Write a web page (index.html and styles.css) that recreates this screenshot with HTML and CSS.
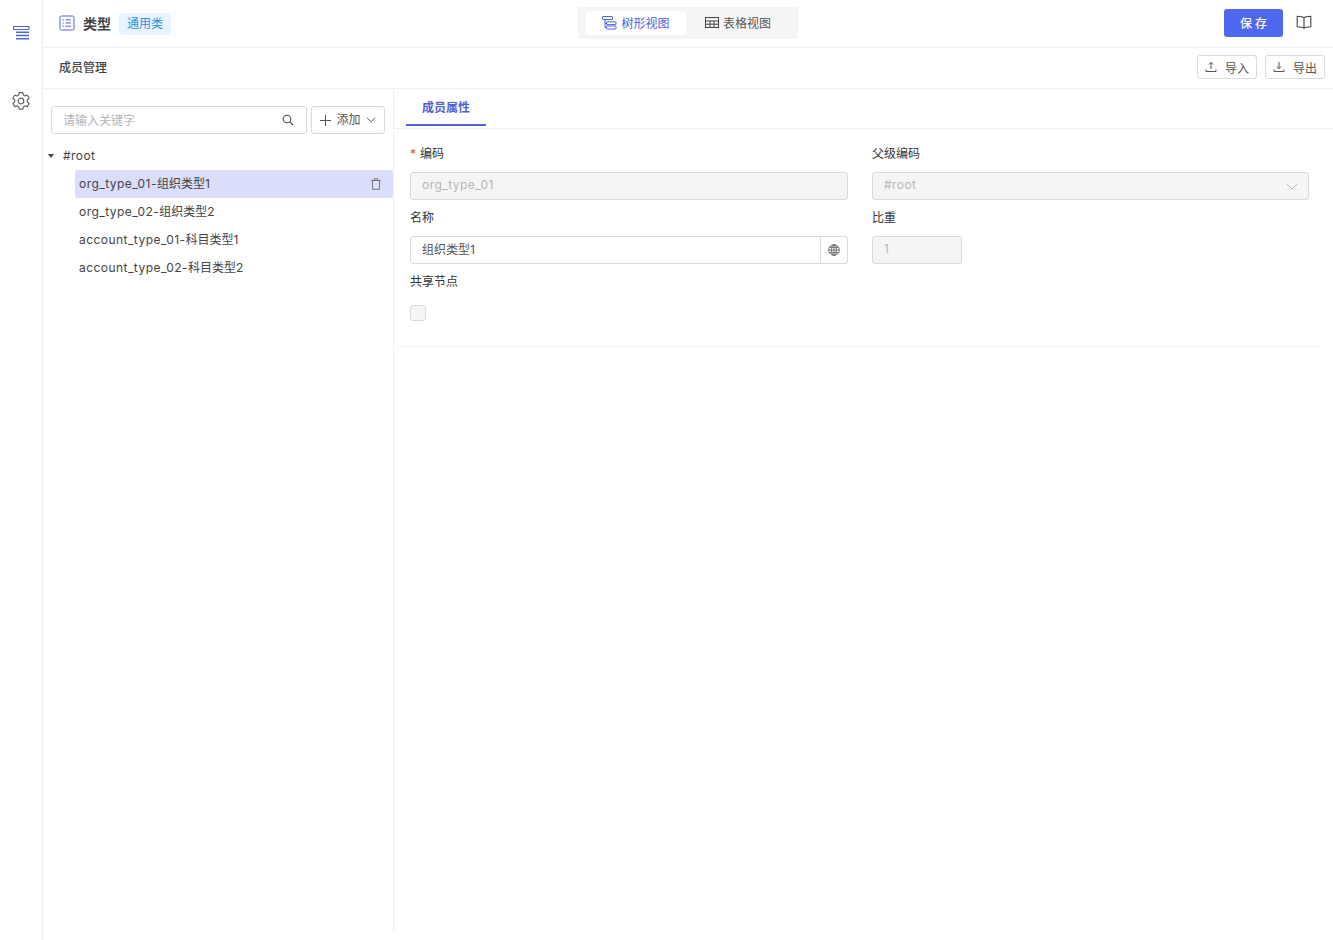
FILE: index.html
```html
<!DOCTYPE html>
<html lang="zh-CN">
<head>
    <meta charset="UTF-8">
    <title>类型</title>
    <link rel="stylesheet" href="styles.css">
</head>
<body>
    <div class="app">
        <!-- Side rail -->
        <aside class="rail">
            <svg class="rail-icon" width="17" height="15" viewBox="0 0 17 15" fill="none" stroke="#4f63d8" stroke-width="1.100">
                <rect x="0.500" y="0.500" width="15.500" height="3" rx="0.500"/>
                <path d="M3 6.300h13M3 9.500h13M3 12.800h13" stroke-width="1.500"/>
            </svg>
            <svg class="rail-icon gear" width="20" height="20" viewBox="0 0 20 20" fill="none" stroke="#666" stroke-width="1.200" stroke-linejoin="round">
                <path d="M8.200 1.600h3.600l.6 2.400 1.500.9 2.400-.7 1.800 3.100-1.800 1.700v1.800l1.800 1.700-1.800 3.100-2.400-.7-1.500.9-.6 2.400H8.200l-.6-2.400-1.500-.9-2.400.7-1.800-3.100L3.700 10.800V9L1.900 7.300l1.800-3.100 2.400.7 1.500-.9z"/>
                <circle cx="10" cy="10" r="2.800"/>
            </svg>
        </aside>

        <main class="main">
            <!-- Top bar -->
            <header class="topbar">
                <div class="title-group">
                    <svg width="16" height="16" viewBox="0 0 16 16" fill="none" stroke="#4f63d8" stroke-width="1">
                        <rect x="1" y="1" width="14" height="14" rx="1.500"/>
                        <path d="M6.500 4.800h5.500M6.500 8h5.500M6.500 11.200h5.500"/>
                        <path d="M3.500 4.800h1.200M3.500 8h1.200M3.500 11.200h1.200" stroke-width="1.200"/>
                    </svg>
                    <span class="title">类型</span>
                    <span class="tag">通用类</span>
                </div>
                <div class="view-switch">
                    <div class="view-option active">
                        <svg width="15" height="14" viewBox="0 0 15 14" fill="none" stroke="#4f63d8" stroke-width="1">
                            <rect x="0.500" y="0.500" width="10" height="3" rx="0.500"/>
                            <path d="M3 3.500V11.500H4.500M3 7.500h1.500"/>
                            <rect x="4.500" y="5.800" width="9.500" height="2.800" rx="0.500"/>
                            <rect x="4.500" y="10" width="9.500" height="3" rx="0.500"/>
                        </svg>
                        <span>树形视图</span>
                    </div>
                    <div class="view-option">
                        <svg width="14" height="13" viewBox="0 0 14 13" fill="none" stroke="#444" stroke-width="1">
                            <rect x="0.500" y="1.500" width="13" height="10"/>
                            <path d="M0.500 5h13M0.500 8.200h13M5 5v6.500M9 5v6.500"/>
                        </svg>
                        <span>表格视图</span>
                    </div>
                </div>
                <div class="top-actions">
                    <button class="btn-save">保 存</button>
                    <svg width="16" height="15" viewBox="0 0 16 15" fill="none" stroke="#444" stroke-width="1.100" stroke-linejoin="round">
                        <path d="M8 3C7 1.800 5 1.200 1.200 1.200v10.600C5 11.800 7 12.300 8 13.500c1-1.200 3-1.700 6.800-1.700V1.200C11 1.200 9 1.800 8 3zM8 3v10.500"/>
                    </svg>
                </div>
            </header>

            <!-- Sub header -->
            <div class="subbar">
                <span class="subbar-title">成员管理</span>
                <div class="subbar-actions">
                    <button class="btn-small">
                        <svg width="12" height="12" viewBox="0 0 12 12" fill="none" stroke="#555" stroke-width="1">
                            <path d="M6 8V1.500M3.800 3.500 6 1.300l2.200 2.200M1 8.500v2h10v-2"/>
                        </svg>
                        <span>导入</span>
                    </button>
                    <button class="btn-small">
                        <svg width="12" height="12" viewBox="0 0 12 12" fill="none" stroke="#555" stroke-width="1">
                            <path d="M6 1v6.500M3.800 5.500 6 7.700l2.200-2.200M1 8.500v2h10v-2"/>
                        </svg>
                        <span>导出</span>
                    </button>
                </div>
            </div>

            <div class="content">
                <!-- Tree panel -->
                <section class="tree-panel">
                    <div class="tree-tools">
                        <div class="search">
                            <span class="search-text">请输入关键字</span>
                            <svg width="12" height="12" viewBox="0 0 12 12" fill="none" stroke="#444" stroke-width="1.100">
                                <circle cx="5" cy="5" r="3.800"/>
                                <path d="M7.800 7.800 11 11"/>
                            </svg>
                        </div>
                        <button class="btn-add">
                            <svg width="11" height="11" viewBox="0 0 11 11" fill="none" stroke="#555" stroke-width="1">
                                <path d="M5.500 0v11M0 5.500h11"/>
                            </svg>
                            <span>添加</span>
                            <svg width="10" height="6" viewBox="0 0 10 6" fill="none" stroke="#555" stroke-width="1">
                                <path d="M1 .8 5 4.800 9 .8"/>
                            </svg>
                        </button>
                    </div>
                    <div class="tree-root">
                        <span class="caret"></span>
                        <span class="latin">#root</span>
                    </div>
                    <ul class="tree-list">
                        <li class="tree-item selected">
                            <span><span class="latin">org_type_01-</span>组织类型1</span>
                            <svg width="12" height="12" viewBox="0 0 12 12" fill="none" stroke="#777" stroke-width="1">
                                <path d="M2.500 2.500v8.800h7V2.500M1.300 2.500h9.400M4.200 2.500V.8h3.600v1.700"/>
                            </svg>
                        </li>
                        <li class="tree-item"><span><span class="latin">org_type_02-</span>组织类型2</span></li>
                        <li class="tree-item"><span><span class="latin">account_type_01-</span>科目类型1</span></li>
                        <li class="tree-item"><span><span class="latin">account_type_02-</span>科目类型2</span></li>
                    </ul>
                </section>

                <!-- Detail panel -->
                <section class="detail">
                    <div class="tabs">
                        <div class="tab">成员属性</div>
                    </div>
                    <div class="form">
                        <div class="field">
                            <label class="label"><span class="required">*</span>编码</label>
                            <div class="input disabled"><span class="latin">org_type_01</span></div>
                        </div>
                        <div class="field">
                            <label class="label">父级编码</label>
                            <div class="input disabled select">
                                <span class="latin">#root</span>
                                <svg width="12" height="7" viewBox="0 0 12 7" fill="none" stroke="#bbb" stroke-width="1">
                                    <path d="M1 1 6 6 11 1"/>
                                </svg>
                            </div>
                        </div>
                        <div class="field">
                            <label class="label">名称</label>
                            <div class="input-group">
                                <div class="input">组织类型1</div>
                                <div class="addon">
                                    <svg width="12" height="12" viewBox="0 0 12 12" fill="none" stroke="#555" stroke-width="0.800">
                                        <circle cx="6" cy="6" r="5.300"/>
                                        <ellipse cx="6" cy="6" rx="2.400" ry="5.300"/>
                                        <path d="M.7 6h10.600M1.500 3.400h9M1.500 8.600h9M6 .7v10.600"/>
                                    </svg>
                                </div>
                            </div>
                        </div>
                        <div class="field">
                            <label class="label">比重</label>
                            <div class="input disabled short">1</div>
                        </div>
                        <div class="field">
                            <label class="label">共享节点</label>
                            <div class="checkbox"></div>
                        </div>
                    </div>
                </section>
            </div>
        </main>
    </div>
</body>
</html>
```
FILE: styles.css
```css
* {
    box-sizing: border-box;
}

body {
    margin: 0;
    height: 940px;
    overflow: hidden;
    background-color: #fff;
    color: #333;
    font-family: Inter, "Noto Sans CJK SC", sans-serif;
    font-size: 12px;
}

svg {
    display: block;
    flex-shrink: 0;
}

.latin {
    letter-spacing: 0.45px;
}

.app {
    display: flex;
    height: 100%;
}

/* Side rail */
.rail {
    width: 43px;
    flex-shrink: 0;
    border-right: 1px solid #ececec;
    padding: 26px 0 0 13px;
}

.gear {
    margin: 50px 0 0 -2px;
}

/* Top bar */
.main {
    flex: 1;
    display: flex;
    flex-direction: column;
    min-width: 0;
}

.topbar {
    height: 48px;
    flex-shrink: 0;
    border-bottom: 1px solid #f0f0f0;
    display: grid;
    grid-template-columns: 519px 220px 1fr;
    align-items: center;
    padding: 0 21px 2px 16px;
}

.title-group {
    display: flex;
    align-items: center;
}

.title {
    margin-left: 8px;
    font-size: 14px;
    font-weight: 600;
    color: #444;
}

.tag {
    margin: 2px 0 0 8px;
    padding: 0 8px;
    height: 22px;
    line-height: 22px;
    border-radius: 3px;
    background-color: #e8f4ff;
    color: #2f8fe8;
}

.view-switch {
    display: flex;
    height: 32px;
    padding: 4px 8px;
    background-color: #f5f5f5;
}

.view-option {
    flex: 1;
    display: flex;
    align-items: center;
    justify-content: center;
    gap: 4px;
    border-radius: 3px;
    color: #555;
}

.view-option.active {
    flex: none;
    width: 100px;
    background-color: #fff;
    color: #4f63d8;
}

.top-actions {
    display: flex;
    align-items: center;
    justify-content: flex-end;
    gap: 13px;
}

.btn-save {
    width: 59px;
    height: 28px;
    border: none;
    border-radius: 3px;
    background-color: #4f68f0;
    color: #fff;
    font: inherit;
    font-weight: 500;
}

/* Sub header */
.subbar {
    height: 41px;
    flex-shrink: 0;
    border-bottom: 1px solid #f0f0f0;
    display: flex;
    align-items: center;
    justify-content: space-between;
    padding: 0 8px 2px 16px;
}

.subbar-title {
    margin-bottom: 2px;
    font-weight: 500;
    color: #444;
}

.subbar-actions {
    display: flex;
    gap: 8px;
}

.btn-small {
    width: 60px;
    height: 24px;
    display: flex;
    align-items: center;
    justify-content: center;
    gap: 8px;
    padding: 0;
    background-color: #fff;
    border: 1px solid #d9d9d9;
    border-radius: 3px;
    color: #555;
    font: inherit;
}

/* Tree panel */
.content {
    flex: 1;
    display: flex;
    min-height: 0;
}

.tree-panel {
    width: 351px;
    height: 842px;
    flex-shrink: 0;
    border-right: 1px solid #efefef;
}

.tree-tools {
    display: flex;
    gap: 4px;
    padding: 17px 8px 0;
}

.search {
    flex: 1;
    height: 28px;
    display: flex;
    align-items: center;
    justify-content: space-between;
    padding: 0 12px 0 11px;
    border: 1px solid #d9d9d9;
    border-radius: 3px;
}

.search-text {
    margin-bottom: 2px;
    color: #b5b5b5;
}

.btn-add {
    width: 74px;
    height: 28px;
    display: flex;
    align-items: center;
    justify-content: center;
    gap: 5px;
    padding: 0;
    background-color: #fff;
    border: 1px solid #d9d9d9;
    border-radius: 3px;
    color: #555;
    font: inherit;
}

.btn-add span {
    margin-bottom: 3px;
}

.tree-root {
    display: flex;
    align-items: center;
    height: 28px;
    margin-top: 8px;
    padding-left: 5px;
    color: #444;
}

.tree-root .latin {
    margin-bottom: 2px;
}

.caret {
    width: 0;
    height: 0;
    margin-right: 9px;
    border-left: 3.500px solid transparent;
    border-right: 3.500px solid transparent;
    border-top: 4px solid #444;
}

.tree-list {
    list-style: none;
    margin: 0;
    padding: 0 0 0 32px;
}

.tree-item {
    height: 28px;
    display: flex;
    align-items: center;
    justify-content: space-between;
    padding: 0 11px 0 4px;
    border-radius: 2px;
    color: #444;
}

.tree-item > span {
    margin-bottom: 4px;
}

.tree-item.selected {
    background-color: #dadefb;
}

/* Detail panel */
.detail {
    flex: 1;
    min-width: 0;
}

.tabs {
    height: 40px;
    border-bottom: 1px solid #f0f0f0;
    padding-left: 12px;
}

.tab {
    width: 80px;
    height: 37px;
    line-height: 37px;
    text-align: center;
    border-bottom: 2px solid #4f63d8;
    color: #4f63d8;
    font-weight: 600;
}

.form {
    display: grid;
    grid-template-columns: 438px 437px;
    column-gap: 24px;
    row-gap: 9px;
    margin: 0 11px 0 4px;
    padding: 16px 12px 25px 12px;
    border-bottom: 1px solid #f0f0f0;
}

.label {
    display: block;
    height: 27px;
    line-height: 18px;
    color: #333;
}

.required {
    color: #e5484d;
    margin-right: 4px;
}

.input {
    height: 28px;
    display: flex;
    align-items: center;
    padding: 0 11px 3px;
    border: 1px solid #d9d9d9;
    border-radius: 3px;
    color: #555;
}

.input.disabled {
    background-color: #f5f5f5;
    color: #b5b5b5;
}

.input.select {
    justify-content: space-between;
}

.input.select svg {
    margin: 3px -1px 0 0;
}

.input.short {
    width: 90px;
}

.input-group {
    display: flex;
}

.input-group .input {
    flex: 1;
    border-radius: 3px 0 0 3px;
}

.addon {
    width: 27px;
    height: 28px;
    display: flex;
    align-items: center;
    justify-content: center;
    border: 1px solid #d9d9d9;
    border-left: none;
    border-radius: 0 3px 3px 0;
}

.checkbox {
    width: 16px;
    height: 16px;
    margin-top: 5px;
    background-color: #f5f5f5;
    border: 1px solid #d9d9d9;
    border-radius: 3px;
}
```
